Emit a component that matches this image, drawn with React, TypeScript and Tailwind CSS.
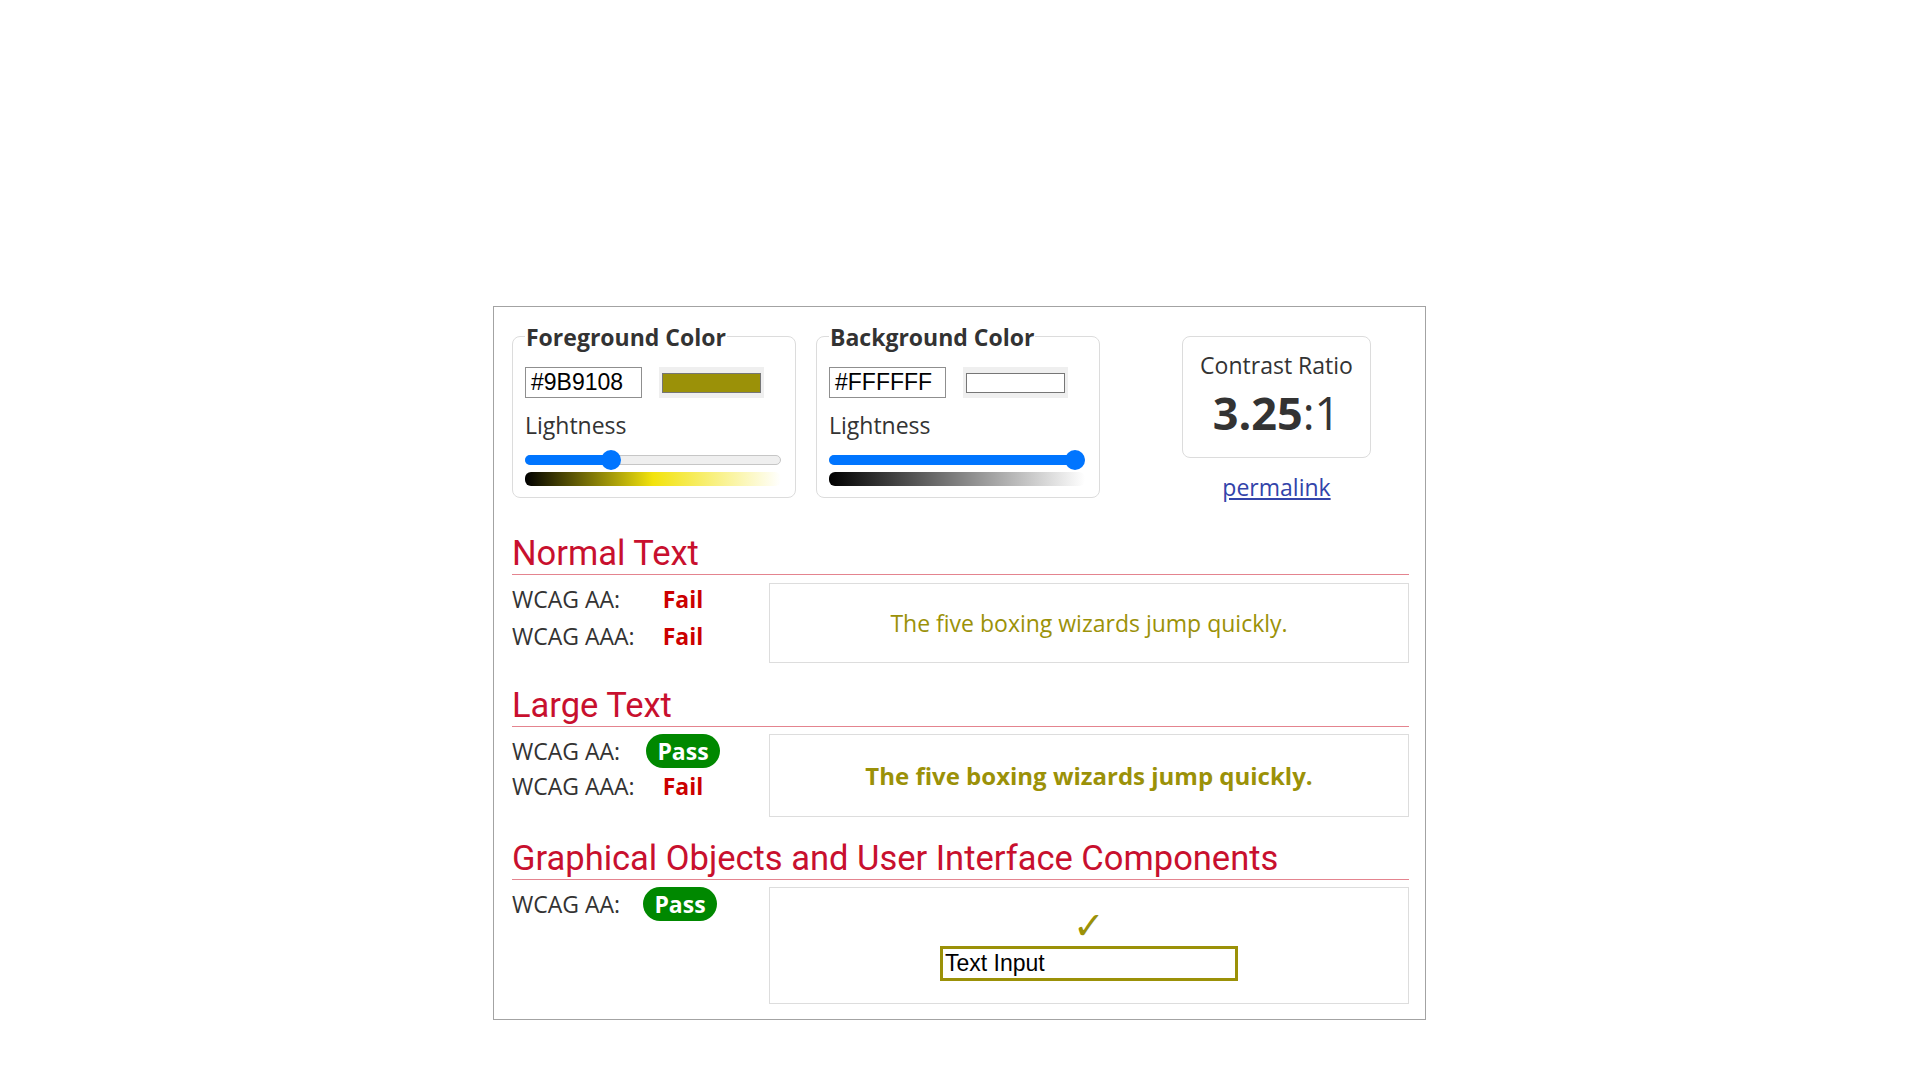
import React from 'react';

type Level = 'pass' | 'fail';

const FG = '#9B9108';

// foreground hue/saturation, used for the lightness gradient
const FG_GRADIENT = 'linear-gradient(to right, #000000, hsl(56 90% 50%), #ffffff)';
const BG_GRADIENT = 'linear-gradient(to right, #000000, #ffffff)';

function LightnessSlider({ value, gradient }: { value: number; gradient: string }) {
  const trackWidth = 256;
  const thumb = 20;
  const left = (value / 100) * (trackWidth - thumb);

  return (
    <div className="w-[256px]">
      <div className="relative mt-[7px] h-[20px] w-full">
        <div className="absolute left-0 right-0 top-[5px] h-[10px] rounded-full border border-[#c6c6c6] bg-[#efefef]" />
        <div
          className="absolute left-0 top-[5px] h-[10px] rounded-full bg-[#0075ff]"
          style={{ width: left + thumb / 2 }}
        />
        <div
          className="absolute top-0 h-[20px] w-[20px] rounded-full bg-[#0075ff]"
          style={{ left }}
        />
      </div>
      <div className="mt-[2px] h-[14px] w-full rounded-[6px]" style={{ background: gradient }} />
    </div>
  );
}

function ColorField({
  title,
  hex,
  swatch,
  lightness,
  gradient,
}: {
  title: string;
  hex: string;
  swatch: string;
  lightness: number;
  gradient: string;
}) {
  return (
    <fieldset className="w-[284px] rounded-lg border border-[#dcdcdc] px-3 pb-[11px]">
      <legend className="px-px pt-px text-[23px] font-bold leading-[34px] text-[#333]">{title}</legend>
      <div className="mt-[13px] flex items-center">
        <div className="flex h-[31px] w-[117px] items-center border border-[#8f8f8f] px-[5px] font-['Liberation_Sans',Arial,sans-serif] text-[23px] text-black">
          {hex}
        </div>
        <div className="ml-[17px] flex h-[31px] w-[105px] items-center justify-center bg-[#efefef]">
          <div className="h-[20px] w-[99px] border border-[#767676]" style={{ background: swatch }} />
        </div>
      </div>
      <div className="mt-[10px] text-[23px] leading-[35px] text-[#333]">Lightness</div>
      <LightnessSlider value={lightness} gradient={gradient} />
    </fieldset>
  );
}

function Result({ level }: { level: Level }) {
  if (level === 'pass') {
    return (
      <span className="inline-flex h-[34px] items-center rounded-full bg-[#008800] px-[11px] text-[23px] font-bold leading-none text-white">
        Pass
      </span>
    );
  }
  return <span className="text-[23px] font-bold leading-[34px] text-[#cc0000]">Fail</span>;
}

function Row({ label, level, wide = true }: { label: string; level: Level; wide?: boolean }) {
  return (
    <div className="flex h-[34px] items-center">
      <span className={wide ? 'w-[131px] text-[23px] leading-[34px] text-[#333]' : 'w-[128px] text-[23px] leading-[34px] text-[#333]'}>
        {label}
      </span>
      <span className="flex w-[80px] justify-center">
        <Result level={level} />
      </span>
    </div>
  );
}

function Heading({ children }: { children: React.ReactNode }) {
  return (
    <h2 className="border-b border-[#e4848f] pb-[2px] font-['Roboto',sans-serif] text-[34.5px] font-normal leading-[38px] text-[#c8102e]">
      {children}
    </h2>
  );
}

export default function App() {
  return (
    <div className="min-h-screen w-full bg-white pt-[306px] font-['Open_Sans',sans-serif]">
      <div className="ml-[493px] h-[714px] w-[933px] border border-[#a3a3a3] pl-[18px] pr-[16px] pt-3">
        {/* Color pickers + ratio */}
        <div className="flex items-start">
          <ColorField title="Foreground Color" hex="#9B9108" swatch={FG} lightness={32} gradient={FG_GRADIENT} />
          <div className="ml-[20px]">
            <ColorField title="Background Color" hex="#FFFFFF" swatch="#ffffff" lightness={100} gradient={BG_GRADIENT} />
          </div>
          <div className="ml-[82px] mt-[17px] flex w-[189px] flex-col items-center">
            <div className="flex h-[122px] w-full flex-col items-center rounded-lg border border-[#dcdcdc] pt-[13px] text-[#333]">
              <div className="text-[23px] leading-[30px]">Contrast Ratio</div>
              <div className="mt-[6px] text-[45px] leading-[54px]">
                <span className="font-bold">3.25</span>:1
              </div>
            </div>
            <a href="#" className="mt-[14px] text-[23px] leading-[30px] text-[#3344aa] underline">
              permalink
            </a>
          </div>
        </div>

        {/* Normal text */}
        <div className="mt-[32px]">
          <Heading>Normal Text</Heading>
          <div className="mt-[7px] flex items-start">
            <div className="flex w-[257px] flex-col gap-[3px]">
              <Row label="WCAG AA:" level="fail" />
              <Row label="WCAG AAA:" level="fail" />
            </div>
            <div className="mt-px flex h-[80px] flex-1 items-center justify-center border border-[#dddddd] text-[23px] text-[#9b9108]">
              The five boxing wizards jump quickly.
            </div>
          </div>
        </div>

        {/* Large text */}
        <div className="mt-[23px]">
          <Heading>Large Text</Heading>
          <div className="mt-[7px] flex items-start">
            <div className="flex w-[257px] flex-col gap-px">
              <Row label="WCAG AA:" level="pass" />
              <Row label="WCAG AAA:" level="fail" />
            </div>
            <div className="flex h-[83px] flex-1 items-center justify-center border border-[#dddddd] text-[24px] font-bold text-[#9b9108]">
              The five boxing wizards jump quickly.
            </div>
          </div>
        </div>

        {/* Graphical objects */}
        <div className="mt-[22px]">
          <Heading>Graphical Objects and User Interface Components</Heading>
          <div className="mt-[7px] flex items-start">
            <div className="flex w-[257px] flex-col">
              <Row label="WCAG AA:" level="pass" wide={false} />
            </div>
            <div className="flex h-[117px] flex-1 flex-col items-center justify-center border border-[#dddddd]">
              <span className="font-['DejaVu_Sans',sans-serif] text-[38px] leading-[30px] text-[#9b9108]">✓</span>
              <div className="mt-[5px] flex h-[35px] w-[298px] items-center border-[3px] border-[#9b9108] pl-[2px] font-['Liberation_Sans',Arial,sans-serif] text-[23px] text-black">
                Text Input
              </div>
            </div>
          </div>
        </div>
      </div>
    </div>
  );
}
